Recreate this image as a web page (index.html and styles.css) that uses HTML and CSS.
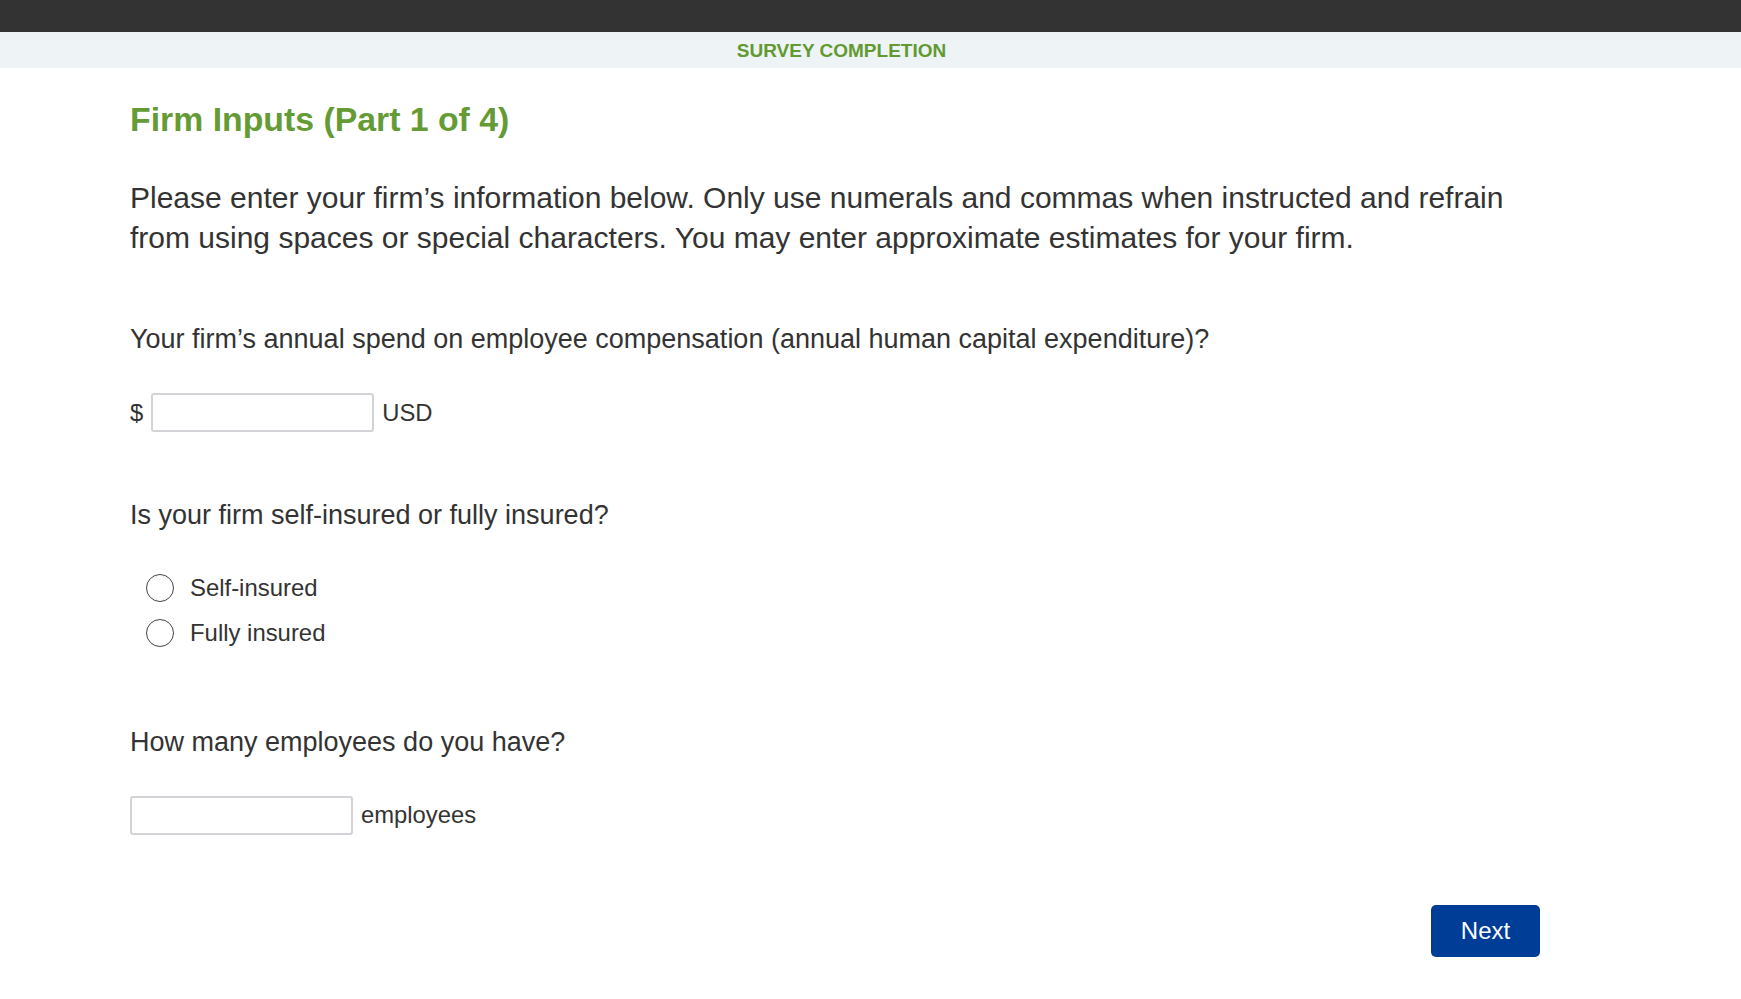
FILE: index.html
```html
<!DOCTYPE html>
<html lang="en">
<head>
    <meta charset="UTF-8">
    <meta name="viewport" content="width=device-width, initial-scale=1.0">
    <title>Survey Completion</title>
    <link rel="stylesheet" href="styles.css">
</head>
<body>
    <div class="topbar"></div>
    <div class="subbar">SURVEY COMPLETION</div>

    <div class="container">
        <h1>Firm Inputs (Part 1 of 4)</h1>
        <p class="intro">Please enter your firm’s information below. Only use numerals and commas when instructed and refrain from using spaces or special characters. You may enter approximate estimates for your firm.</p>

        <form id="firmForm">
            <div class="question q-spend">
                <label class="q-text" for="compSpend">Your firm’s annual spend on employee compensation (annual human capital expenditure)?</label>
                <div class="field-row">
                    <span class="unit">$</span>
                    <input type="text" id="compSpend">
                    <span class="unit">USD</span>
                </div>
            </div>

            <div class="question q-insured">
                <div class="q-text">Is your firm self-insured or fully insured?</div>
                <div class="options">
                    <label class="option"><input type="radio" name="insured" value="self"><span class="dot"></span>Self-insured</label>
                    <label class="option"><input type="radio" name="insured" value="fully"><span class="dot"></span>Fully insured</label>
                </div>
            </div>

            <div class="question q-employees">
                <label class="q-text" for="employees">How many employees do you have?</label>
                <div class="field-row">
                    <input type="text" id="employees">
                    <span class="unit">employees</span>
                </div>
            </div>

            <div class="actions">
                <button type="submit" class="btn-next">Next</button>
            </div>
        </form>
    </div>
</body>
</html>
```

FILE: styles.css
```css
body {
    font-family: "Liberation Sans", Arial, sans-serif;
    color: #333;
    margin: 0;
    background: #fff;
}
.topbar {
    height: 32px;
    background-color: #333;
}
.subbar {
    height: 36px;
    line-height: 38px;
    background-color: #eef3f6;
    text-align: center;
    padding-right: 58px;
    color: #629a31;
    font-weight: bold;
    font-size: 19px;
}
.container {
    width: 1410px;
    margin-left: 130px;
}
h1 {
    color: #659b35;
    font-size: 33.8px;
    margin: 0;
    padding-top: 31px;
    line-height: 40px;
}
.intro {
    font-size: 30px;
    line-height: 40px;
    margin: 39px 0 0;
    max-width: 1390px;
}
.question {
    margin-top: 65px;
}
.q-insured {
    margin-top: 67px;
}
.q-employees {
    margin-top: 79px;
}
.q-text {
    display: block;
    font-size: 27px;
    line-height: 32px;
}
.field-row {
    display: flex;
    align-items: center;
    gap: 8px;
    margin-top: 38px;
    font-size: 23.8px;
}
.field-row input {
    width: 223px;
    height: 39px;
    box-sizing: border-box;
    border: 2px solid #d2d2d7;
    border-radius: 3px;
    padding: 4px 8px;
    font-size: 20px;
    font-family: inherit;
}
.options {
    display: flex;
    flex-direction: column;
    gap: 16.5px;
    margin-top: 43px;
    padding-left: 16px;
}
.option {
    display: flex;
    align-items: center;
    gap: 16px;
    font-size: 23.9px;
    cursor: pointer;
}
.option input {
    display: none;
}
.dot {
    width: 26px;
    height: 26px;
    border: 1.5px solid #444;
    border-radius: 50%;
}
.actions {
    display: flex;
    justify-content: flex-end;
    margin-top: 70px;
}
.btn-next {
    background-color: #003d96;
    color: white;
    border: none;
    border-radius: 5px;
    width: 109px;
    height: 52px;
    font-size: 24px;
    font-family: inherit;
    cursor: pointer;
}
```
